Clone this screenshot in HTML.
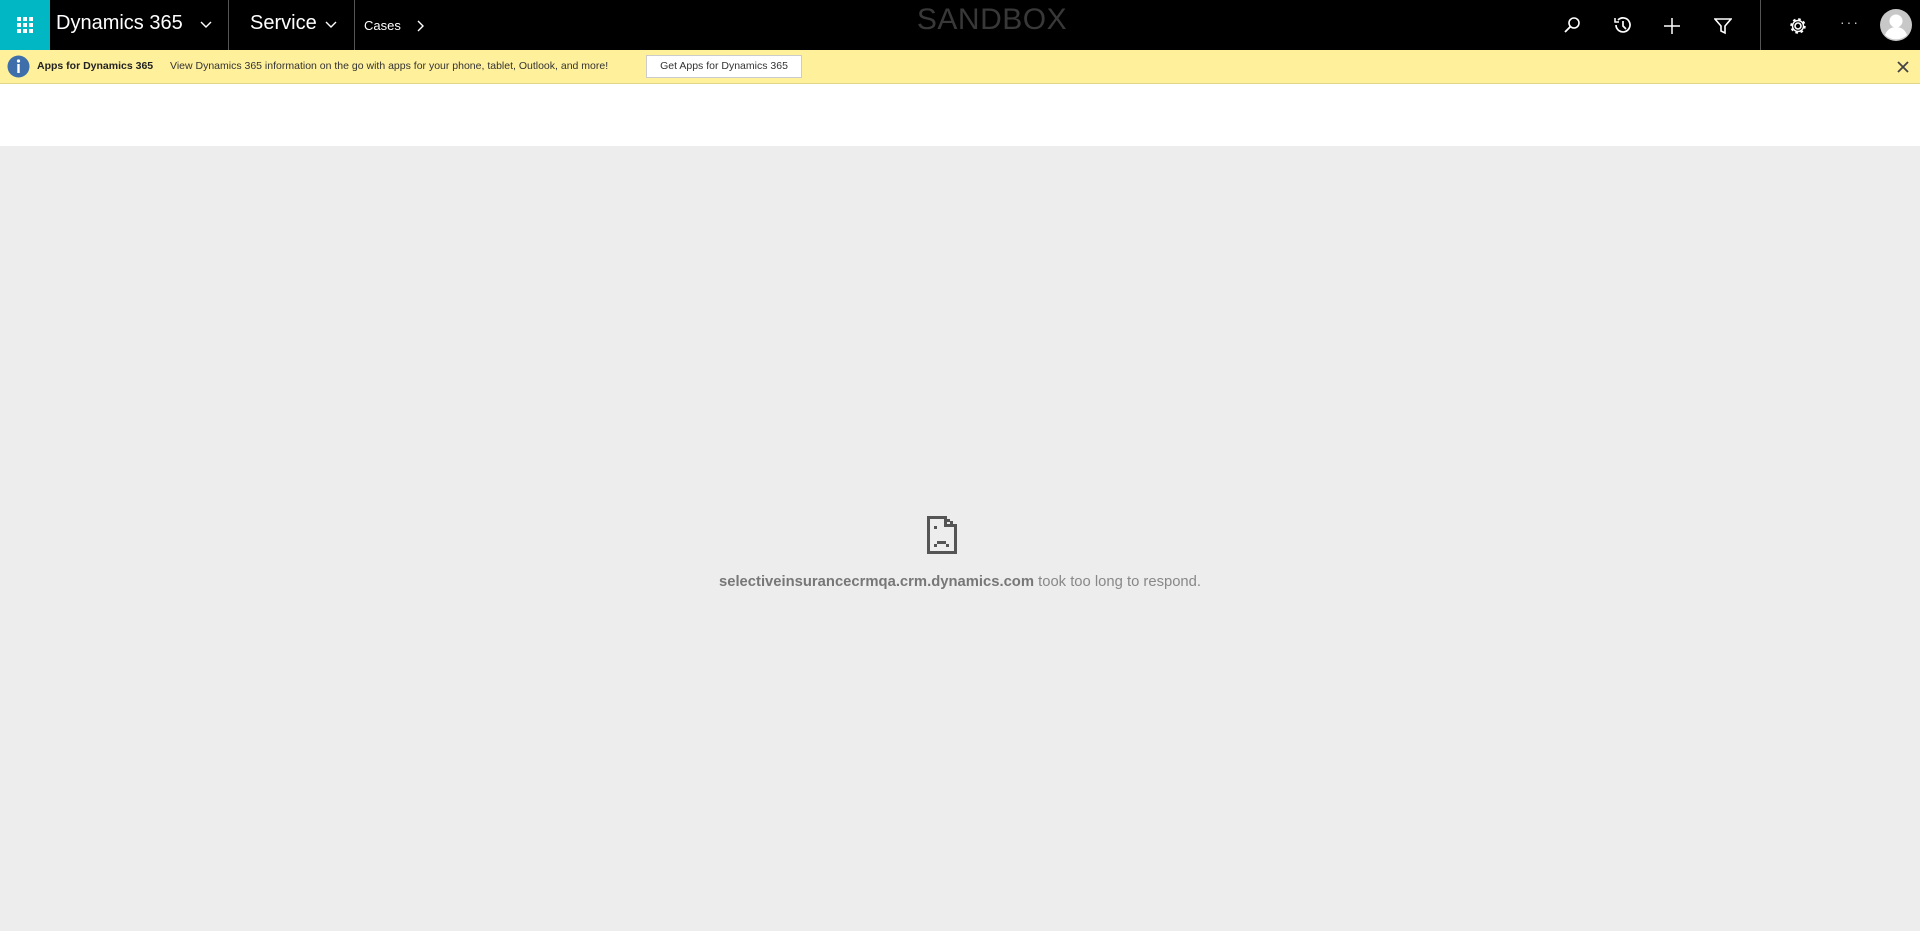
<!DOCTYPE html>
<html><head><meta charset="utf-8"><style>
*{margin:0;padding:0;box-sizing:border-box}
body{width:1920px;height:931px;background:#ededed;font-family:"Liberation Sans",sans-serif;overflow:hidden;position:relative}
.top{position:absolute;left:0;top:0;width:1920px;height:50px;background:#000;color:#fff}
.waffle{position:absolute;left:0;top:0;width:50px;height:50px;background:#00b7c3}
.t{position:absolute;white-space:nowrap}
.div{position:absolute;top:0;width:1px;height:50px;background:#555}
.ban{position:absolute;left:0;top:50px;width:1920px;height:34px;background:#fff09c;border-bottom:1px solid #e0d68a;font-size:11.5px;color:#222}
.white{position:absolute;left:0;top:84px;width:1920px;height:62px;background:#fff}
</style></head><body>
<div class="top">
 <div class="waffle"><svg width="50" height="50"><g fill="#fff">
 <rect x="17" y="17" width="4" height="4"/><rect x="23" y="17" width="4" height="4"/><rect x="29" y="17" width="4" height="4"/>
 <rect x="17" y="23" width="4" height="4"/><rect x="23" y="23" width="4" height="4"/><rect x="29" y="23" width="4" height="4"/>
 <rect x="17" y="29" width="4" height="4"/><rect x="23" y="29" width="4" height="4"/><rect x="29" y="29" width="4" height="4"/></g></svg></div>
 <div class="t" style="left:56px;top:12px;font-size:20px">Dynamics 365</div>
 <svg class="t" style="left:200px;top:21px" width="12" height="8"><path d="M1 1l5 5 5-5" stroke="#fff" stroke-width="1.4" fill="none"/></svg>
 <div class="div" style="left:228px"></div>
 <div class="t" style="left:250px;top:12px;font-size:20px">Service</div>
 <svg class="t" style="left:325px;top:21px" width="12" height="8"><path d="M1 1l5 5 5-5" stroke="#fff" stroke-width="1.4" fill="none"/></svg>
 <div class="div" style="left:354px"></div>
 <div class="t" style="left:364px;top:18px;font-size:13px">Cases</div>
 <svg class="t" style="left:417px;top:20px" width="8" height="12"><path d="M1 1l5 5-5 5" stroke="#fff" stroke-width="1.4" fill="none"/></svg>
 <div class="t" style="left:0;width:1984px;text-align:center;top:3px;font-size:30px;color:#383838;letter-spacing:0.5px">SANDBOX</div>
 <svg class="t" style="left:1562px;top:15px" width="20" height="20"><circle cx="12" cy="8" r="5" stroke="#fff" stroke-width="1.6" fill="none"/><path d="M8.5 11.5L3 17" stroke="#fff" stroke-width="1.8"/></svg>
 <svg class="t" style="left:1612px;top:15px" width="20" height="20"><path d="M4 10a7 7 0 1 0 2-5" stroke="#fff" stroke-width="1.7" fill="none"/><path d="M3 3v4h4" stroke="#fff" stroke-width="1.5" fill="none"/><path d="M11 6v5l3 3" stroke="#fff" stroke-width="1.7" fill="none"/></svg>
 <svg class="t" style="left:1663px;top:17px" width="18" height="18"><path d="M9 1v16M1 9h16" stroke="#fff" stroke-width="1.5"/></svg>
 <svg class="t" style="left:1714px;top:17px" width="18" height="18"><path d="M1 2h16l-6 7v7l-4-2V9z" stroke="#fff" stroke-width="1.6" fill="none"/></svg>
 <div class="div" style="left:1760px"></div>
 <svg class="t" style="left:1788px;top:16px" width="20" height="20"><circle cx="10" cy="10" r="3" stroke="#fff" stroke-width="1.6" fill="none"/><circle cx="10" cy="10" r="6.5" stroke="#fff" stroke-width="2.5" stroke-dasharray="2.5 2.6" fill="none"/><circle cx="10" cy="10" r="5.5" stroke="#fff" stroke-width="1.4" fill="none"/></svg>
 <div class="t" style="left:1840px;top:14px;font-size:14px;color:#ccc;letter-spacing:2px">···</div>
 <svg class="t" style="left:1880px;top:9px" width="32" height="32"><circle cx="16" cy="16" r="16" fill="#c8c8c8"/><circle cx="16" cy="12" r="6.5" fill="#fff"/><path d="M5 26c2-6 7-8 11-8s9 2 11 8a16 16 0 0 1-22 0z" fill="#fff"/></svg>
</div>
<div class="ban">
 <svg class="t" style="left:7px;top:5px" width="23" height="23"><circle cx="11.5" cy="11.5" r="11" fill="#3e6fab"/><circle cx="11.5" cy="6" r="1.6" fill="#fff"/><rect x="10.3" y="9" width="2.4" height="9" fill="#fff"/></svg>
 <div class="t" style="left:37px;top:10px;font-weight:bold;font-size:10.5px">Apps for Dynamics 365</div>
 <div class="t" style="left:170px;top:10px;font-size:10.5px;color:#333">View Dynamics 365 information on the go with apps for your phone, tablet, Outlook, and more!</div>
 <div class="t" style="left:646px;top:5px;width:156px;height:23px;background:#fff;border:1px solid #ccc;font-size:10.5px;text-align:center;line-height:21px;color:#333">Get Apps for Dynamics 365</div>
 <svg class="t" style="left:1897px;top:11px" width="12" height="12"><path d="M1 1l10 10M11 1L1 11" stroke="#444" stroke-width="1.8"/></svg>
</div>
<div class="white"></div>
<svg class="t" style="left:925px;top:514px" width="34" height="42"><g fill="#555">
 <rect x="2" y="2" width="3" height="38"/><rect x="2" y="37" width="30" height="3"/><rect x="29" y="10" width="3" height="30"/><rect x="2" y="2" width="20" height="3"/><rect x="19" y="2" width="3" height="11"/><rect x="19" y="10" width="13" height="3"/><rect x="22" y="5" width="3" height="3"/><rect x="25" y="7" width="3" height="3"/>
 <rect x="9" y="12" width="3" height="3"/><rect x="9" y="30" width="3" height="3"/><rect x="12" y="27" width="9" height="3"/><rect x="21" y="30" width="3" height="3"/></g></svg>
<div class="t" style="left:0;width:1920px;text-align:center;top:574px;font-size:14.8px;color:#888"><b style="color:#777">selectiveinsurancecrmqa.crm.dynamics.com</b> took too long to respond.</div>
</body></html>
